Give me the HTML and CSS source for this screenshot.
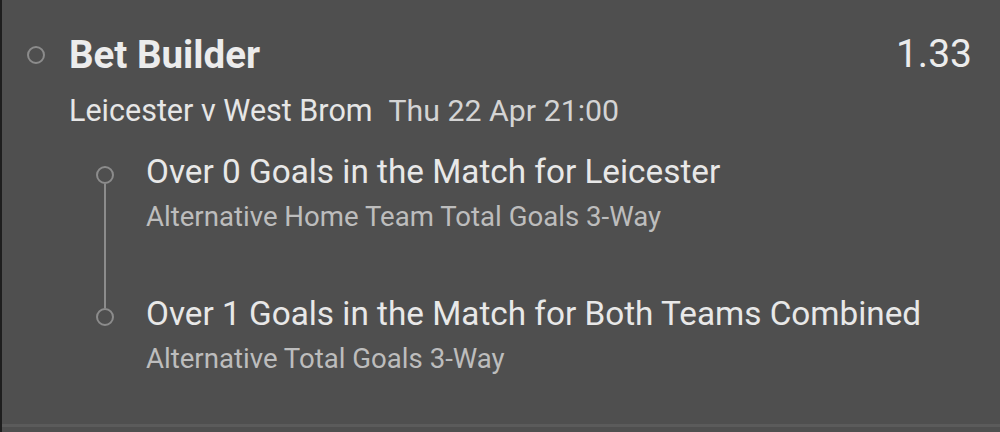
FILE: index.html
```html
<!DOCTYPE html>
<html lang="en">
  <head>
    <meta charset="UTF-8" />
    <title>Bet Builder</title>
    <link rel="stylesheet" href="styles.css">
  </head>
  <body>
    <div class="bet">
      <div class="bet-head">
        <span class="dot"></span>
        <h2 class="bet-title">Bet Builder</h2>
        <span class="odds">1.33</span>
      </div>
      <div class="event">
        <span class="teams">Leicester v West Brom</span>
        <span class="date">Thu 22 Apr 21:00</span>
      </div>
      <ul class="legs">
        <li class="leg">
          <span class="leg-dot"></span>
          <div class="leg-name">Over 0 Goals in the Match for Leicester</div>
          <div class="leg-market">Alternative Home Team Total Goals 3-Way</div>
        </li>
        <li class="leg">
          <span class="leg-dot"></span>
          <div class="leg-name">Over 1 Goals in the Match for Both Teams Combined</div>
          <div class="leg-market">Alternative Total Goals 3-Way</div>
        </li>
      </ul>
    </div>
  </body>
</html>
```
FILE: styles.css
```css
* {
  margin: 0;
  padding: 0;
  box-sizing: border-box;
  font-family: Roboto, "Noto Sans", sans-serif;
}
body {
  width: 1000px;
  height: 432px;
  background: #4f4f4f;
  border-left: 2px solid #1e1e1e;
  overflow: hidden;
}
.bet {
  padding: 28px 28px 0 25px;
  border-bottom: 3px solid #5b5b5b;
  height: 427px;
}
.bet-head {
  display: flex;
  align-items: center;
  height: 52px;
}
.dot {
  width: 18px;
  height: 18px;
  border: 2px solid #8c8c8c;
  border-radius: 50%;
  margin-right: 24px;
  margin-top: 2px;
}
.bet-title {
  font-size: 38.5px;
  font-weight: 700;
  color: #ececec;
  flex: 1;
}
.odds {
  font-size: 39px;
  color: #ececec;
}
.event {
  margin: 13px 0 0 42px;
  display: flex;
  align-items: baseline;
  gap: 16px;
  line-height: 36px;
}
.teams {
  font-size: 30.5px;
  color: #e6e6e6;
}
.date {
  font-size: 30.3px;
  color: #d4d4d4;
}
.legs {
  list-style: none;
  margin: 23px 0 0 69px;
}
.leg {
  position: relative;
  padding-left: 50px;
  height: 142px;
}
.leg-dot {
  position: absolute;
  left: 0;
  top: 14px;
  width: 18px;
  height: 18px;
  border: 2px solid #8c8c8c;
  border-radius: 50%;
}
.leg:first-child::after {
  content: "";
  position: absolute;
  left: 8px;
  top: 32px;
  width: 2px;
  height: 124px;
  background: #8c8c8c;
}
.leg-name {
  font-size: 33.3px;
  color: #e8e8e8;
  line-height: 40px;
}
.leg-market {
  font-size: 27.6px;
  color: #bdbdbd;
  line-height: 34px;
  margin-top: 8px;
}
```
